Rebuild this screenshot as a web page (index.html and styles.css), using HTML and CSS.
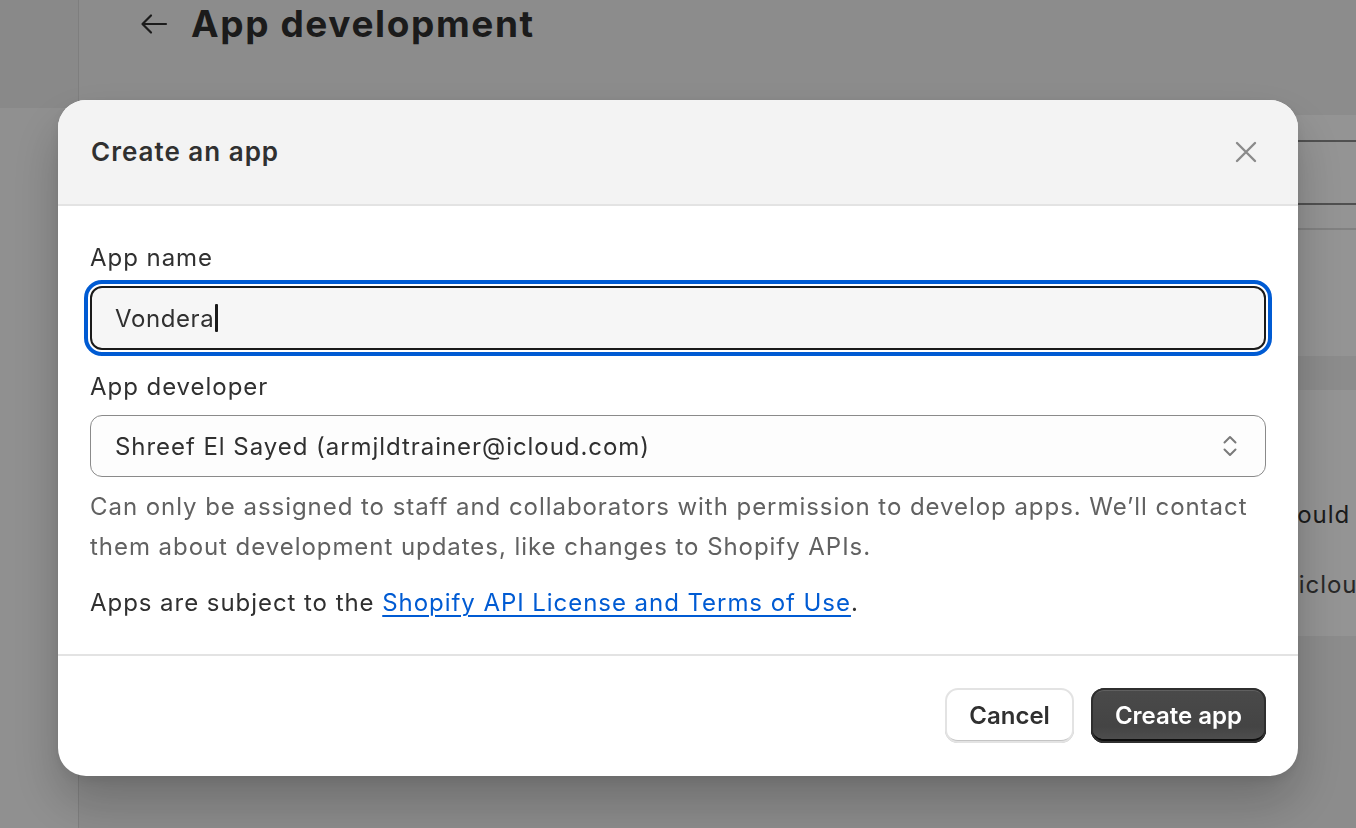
FILE: index.html
```html
<!DOCTYPE html>
<html lang="en">
<head>
<meta charset="utf-8">
<title>App development</title>
<link rel="stylesheet" href="styles.css">
</head>
<body>
<div class="page">
  <aside class="sidebar">
    <div class="sidebar-top"></div>
    <div class="sidebar-rest"></div>
  </aside>
  <main class="main">
    <header class="page-header">
      <span class="back">
        <svg viewBox="0 0 28 28" width="28" height="28" fill="none" stroke="currentColor" stroke-width="2.2" stroke-linecap="round" stroke-linejoin="round"><path d="M26 14H3M11 5.5L2.5 14L11 22.5"/></svg>
      </span>
      <h1 class="page-title">App development</h1>
    </header>
    <section class="card card-a">
      <div class="card-field"></div>
      <div class="card-divider"></div>
    </section>
    <section class="card card-b">
      <p class="card-line">After you create the app, the developer you selected gets an invitation mail. The developer should review it</p>
      <p class="card-line muted">An invitation email will be sent to Shreef El Sayed at the primary email address armjldtrainer@icloud.com</p>
    </section>
  </main>
</div>

<div class="backdrop"></div>

<div class="modal-layer">
  <div class="modal" role="dialog" aria-labelledby="modal-title">
    <div class="modal-header">
      <h2 class="modal-title" id="modal-title">Create an app</h2>
      <button class="close" aria-label="Close">
        <svg viewBox="0 0 22 22" width="22" height="22" fill="none" stroke="currentColor" stroke-width="2.4" stroke-linecap="round"><path d="M2 2L20 20M20 2L2 20"/></svg>
      </button>
    </div>
    <div class="modal-body">
      <label class="field-label">App name</label>
      <div class="text-field"><span>Vondera</span><span class="caret"></span></div>

      <label class="field-label developer-label">App developer</label>
      <div class="select">
        <span>Shreef El Sayed (armjldtrainer@icloud.com)</span>
        <svg class="chevrons" viewBox="0 0 14 22" width="14" height="22" fill="none" stroke="currentColor" stroke-width="2" stroke-linecap="round" stroke-linejoin="round"><path d="M1.5 7.5L7 2L12.5 7.5M1.5 14.5L7 20L12.5 14.5"/></svg>
      </div>
      <p class="help">Can only be assigned to staff and collaborators with permission to develop apps. We’ll contact them about development updates, like changes to Shopify APIs.</p>
      <p class="terms">Apps are subject to the <a class="link" href="#">Shopify API License and Terms of Use</a>.</p>
    </div>
    <div class="modal-footer">
      <button class="btn btn-secondary">Cancel</button>
      <button class="btn btn-primary">Create app</button>
    </div>
  </div>
</div>
</body>
</html>
```

FILE: styles.css
```css
* { box-sizing: border-box; }

html, body {
  margin: 0;
  height: 100%;
}

body {
  font-family: Inter, "Noto Sans", sans-serif;
  background: #f1f1f1;
  color: #303030;
  overflow: hidden;
}

/* ---------- background page ---------- */
.page {
  display: flex;
  height: 100vh;
  overflow: hidden;
}

.sidebar {
  width: 79px;
  flex: none;
  display: flex;
  flex-direction: column;
  border-right: 1px solid #dadada;
}

.sidebar-top {
  height: 108px;
  background: #ececec;
}

.sidebar-rest {
  flex: 1;
  background: #f8f8f8;
}

.main {
  flex: 1;
  min-width: 0;
  padding-left: 61px;
  display: flex;
  flex-direction: column;
}

.page-header {
  height: 48px;
  display: flex;
  align-items: center;
  gap: 23px;
}

.back {
  display: flex;
  color: #303030;
}

.page-title {
  margin: 0;
  font-size: 37px;
  line-height: 48px;
  font-weight: 700;
  color: #303030;
  letter-spacing: 1.6px;
}

.card {
  background: #ffffff;
  border-radius: 16px 0 0 16px;
  overflow: hidden;
}

.card-a {
  margin-top: 67px;
  height: 241px;
  padding-top: 25px;
}

.card-field {
  height: 65px;
  border-top: 2px solid #8a8a8a;
  border-bottom: 2px solid #8a8a8a;
}

.card-divider {
  margin-top: 23px;
  height: 2px;
  background: #dedede;
}

.card-b {
  margin-top: 34px;
  height: 246px;
  padding: 105px 0 0 9px;
  white-space: nowrap;
}

.card-line {
  margin: 0;
  font-size: 24px;
  line-height: 40px;
  letter-spacing: 0.95px;
  color: #303030;
}

.card-line.muted {
  margin-top: 30px;
  color: #444444;
}

/* ---------- backdrop ---------- */
.backdrop {
  position: fixed;
  inset: 0;
  background: rgba(0, 0, 0, 0.42);
}

/* ---------- modal ---------- */
.modal-layer {
  position: fixed;
  inset: 0;
  display: flex;
  justify-content: center;
  align-items: flex-start;
  padding-top: 100px;
}

.modal {
  width: 1240px;
  background: #ffffff;
  border-radius: 28px;
  overflow: hidden;
  box-shadow: 0 26px 50px rgba(0, 0, 0, 0.22), 0 4px 12px rgba(0, 0, 0, 0.08);
}

.modal-header {
  height: 106px;
  background: #f3f3f3;
  border-bottom: 2px solid #e3e3e3;
  padding: 0 32px 0 33px;
  display: flex;
  align-items: center;
  justify-content: space-between;
}

.modal-title {
  margin: 0;
  font-size: 26px;
  line-height: 40px;
  font-weight: 600;
  letter-spacing: 1px;
  color: #303030;
}

.close {
  width: 40px;
  height: 40px;
  border: 0;
  padding: 0;
  background: transparent;
  color: #8a8a8a;
  display: flex;
  align-items: center;
  justify-content: center;
}

.modal-body {
  padding: 32px 32px 31px;
  letter-spacing: 0.95px;
}

.field-label {
  display: block;
  font-size: 24px;
  line-height: 40px;
  color: #303030;
}

.developer-label {
  margin-top: 17px;
}

.text-field {
  margin-top: 8px;
  height: 64px;
  border: 2px solid #1a1a1a;
  border-radius: 12px;
  background: #f6f6f6;
  outline: 4px solid #005bd3;
  outline-offset: 2px;
  padding: 0 23px;
  display: flex;
  align-items: center;
  font-size: 24px;
  letter-spacing: 0.6px;
  color: #303030;
}

.caret {
  width: 3px;
  height: 28px;
  margin-left: 1px;
  background: #1a1a1a;
  border-radius: 1px;
}

.select {
  margin-top: 8px;
  height: 62px;
  border: 1px solid #8a8a8a;
  border-radius: 12px;
  background: #fdfdfd;
  padding: 0 28px 0 24px;
  display: flex;
  align-items: center;
  justify-content: space-between;
  font-size: 24px;
  color: #303030;
}

.chevrons {
  color: #7a7a7a;
}

.help {
  margin: 10px 0 0;
  font-size: 24px;
  line-height: 40px;
  color: #616161;
}

.terms {
  margin: 16px 0 0;
  font-size: 24px;
  line-height: 40px;
  color: #303030;
}

.link {
  color: #005bd3;
  text-decoration: underline;
  text-decoration-thickness: 2px;
  text-underline-offset: 4px;
}

.modal-footer {
  border-top: 2px solid #e3e3e3;
  padding: 32px 32px 33px;
  display: flex;
  justify-content: flex-end;
  gap: 17px;
}

.btn {
  height: 55px;
  padding: 0 24px;
  border: 0;
  border-radius: 13px;
  font-family: inherit;
  font-size: 24px;
  font-weight: 600;
  line-height: 55px;
}

.btn-secondary {
  background: #ffffff;
  color: #303030;
  box-shadow: inset 0 0 0 2px #e3e3e3, inset 0 -3px 0 #c4c4c4;
}

.btn-primary {
  background: linear-gradient(180deg, #4a4a4a 0%, #444444 70%, #505050 100%);
  color: #ffffff;
  box-shadow: inset 0 0 0 2px #2f2f2f, inset 0 -4px 0 #0d0d0d, inset 0 3px 0 rgba(255, 255, 255, 0.12);
}
```
